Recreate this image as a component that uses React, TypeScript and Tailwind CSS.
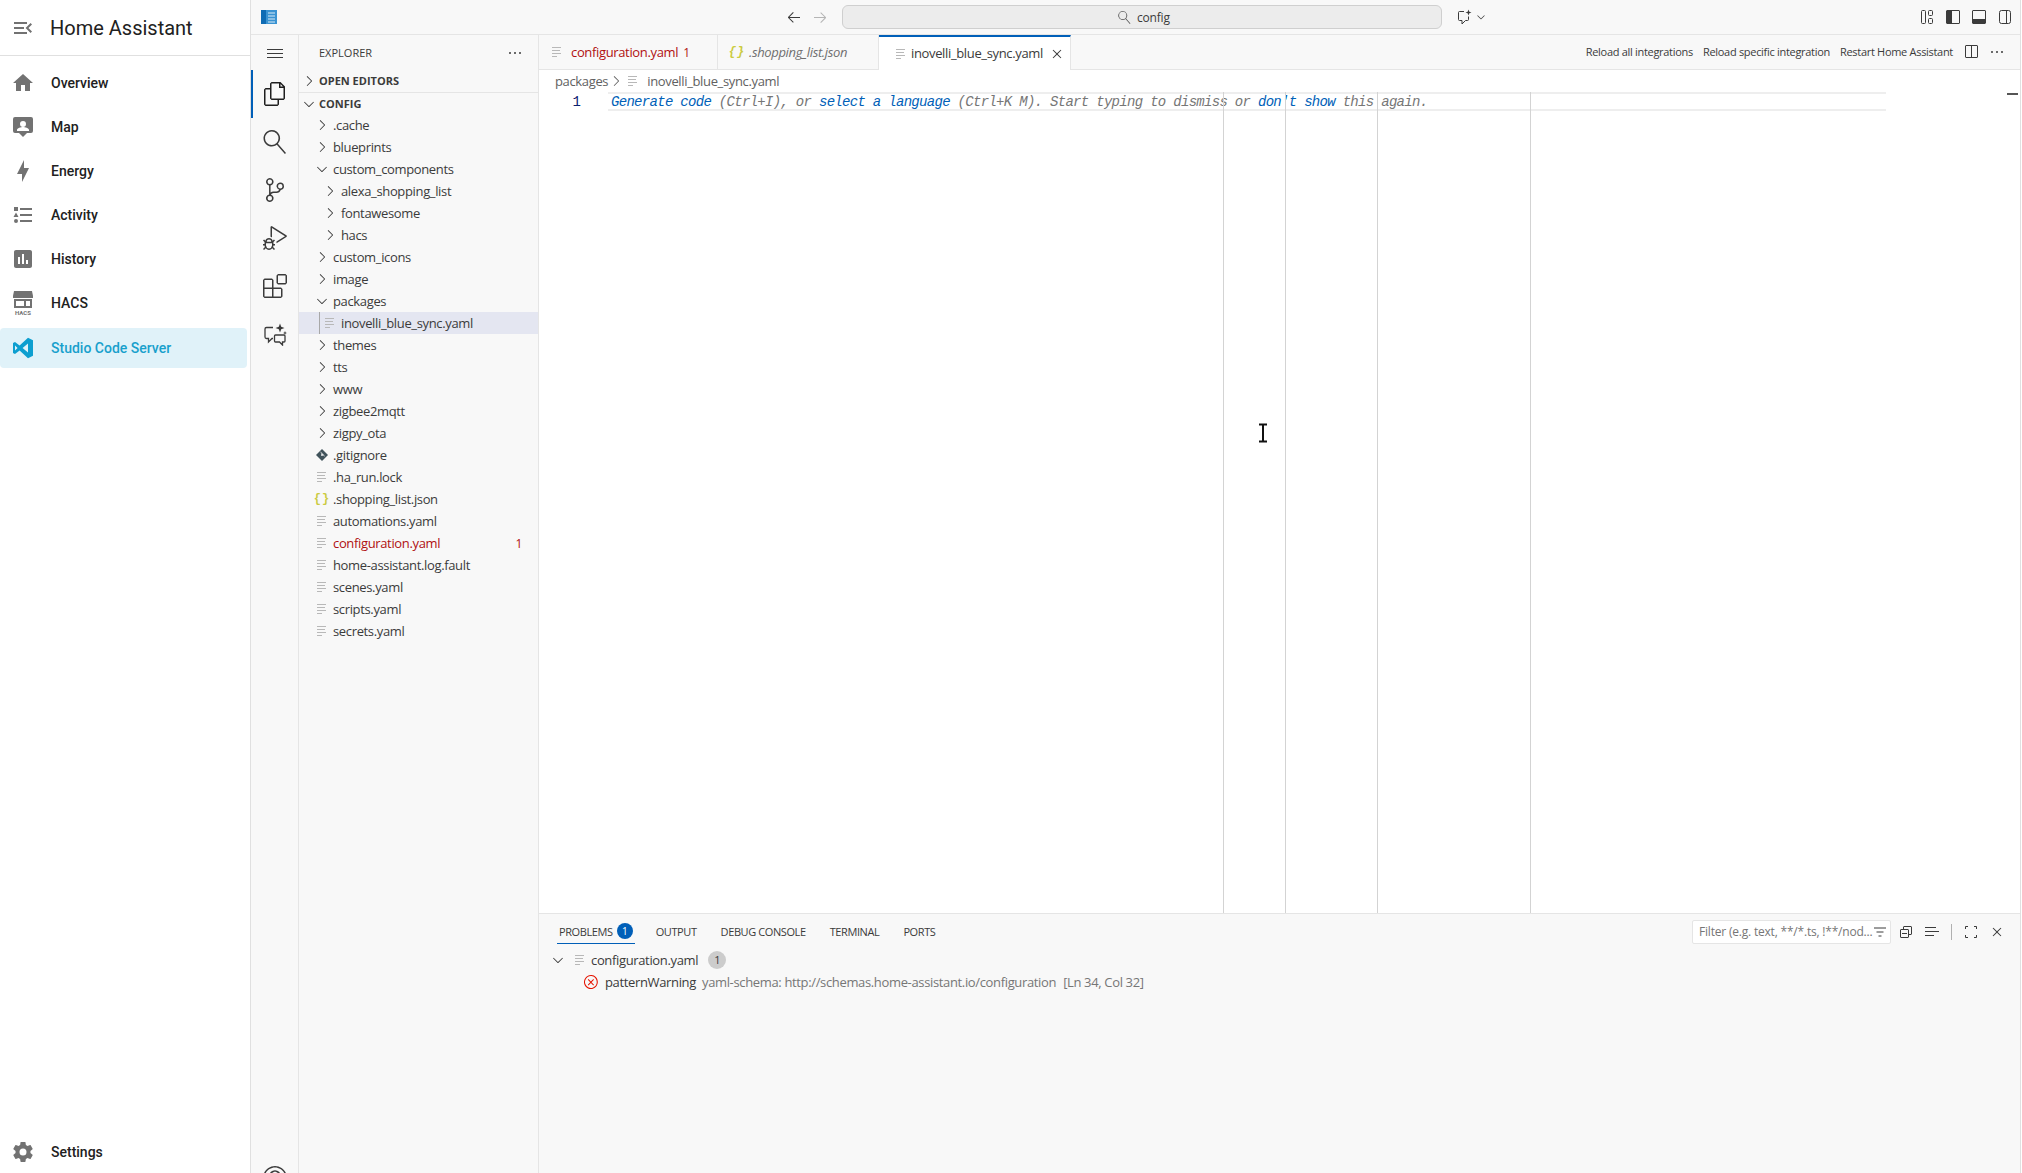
import React from 'react';
import {
  VscArrowLeft, VscArrowRight, VscChevronDown, VscChevronRight, VscClose, VscCollapseAll,
  VscDebugAlt, VscEllipsis, VscError, VscExtensions, VscFiles,
  VscLayoutPanel, VscLayoutSidebarLeft, VscMenu,
  VscSearch, VscSourceControl, VscSplitHorizontal, VscAccount, VscListSelection,
} from 'react-icons/vsc';

const mdi = {
  menuOpen: 'M21,15.61L19.59,17L14.58,12L19.59,7L21,8.39L17.44,12L21,15.61M3,6H16V8H3V6M3,13V11H13V13H3M3,18V16H16V18H3Z',
  home: 'M10,20V14H14V20H19V12H22L12,3L2,12H5V20H10Z',
  map: 'M4,2H20A2,2 0 0,1 22,4V16A2,2 0 0,1 20,18H16L12,22L8,18H4A2,2 0 0,1 2,16V4A2,2 0 0,1 4,2M12,6A3,3 0 0,0 9,9A3,3 0 0,0 12,12A3,3 0 0,0 15,9A3,3 0 0,0 12,6M6,16H18V15C18,13 14,12 12,12C10,12 6,13 6,15V16Z',
  bolt: 'M11,15H6L13,1V9H18L11,23V15Z',
  list: 'M5,9.5L7.5,14H2.5L5,9.5M3,4H7V8H3V4M5,20A2,2 0 0,0 7,18A2,2 0 0,0 5,16A2,2 0 0,0 3,18A2,2 0 0,0 5,20M9,5V7H21V5H9M9,19H21V17H9V19M9,13H21V11H9V13Z',
  chart: 'M19 3H5C3.9 3 3 3.9 3 5V19C3 20.1 3.9 21 5 21H19C20.1 21 21 20.1 21 19V5C21 3.9 20.1 3 19 3M9 17H7V10H9V17M13 17H11V7H13V17M17 17H15V13H17V17Z',
  cog: 'M12,15.5A3.5,3.5 0 0,1 8.5,12A3.5,3.5 0 0,1 12,8.5A3.5,3.5 0 0,1 15.5,12A3.5,3.5 0 0,1 12,15.5M19.43,12.97C19.47,12.65 19.5,12.33 19.5,12C19.5,11.67 19.47,11.34 19.43,11L21.54,9.37C21.73,9.22 21.78,8.95 21.66,8.73L19.66,5.27C19.54,5.05 19.27,4.96 19.05,5.05L16.56,6.05C16.04,5.66 15.5,5.32 14.87,5.07L14.5,2.42C14.46,2.18 14.25,2 14,2H10C9.75,2 9.54,2.18 9.5,2.42L9.13,5.07C8.5,5.32 7.96,5.66 7.44,6.05L4.95,5.05C4.73,4.96 4.46,5.05 4.34,5.27L2.34,8.73C2.21,8.95 2.27,9.22 2.46,9.37L4.57,11C4.53,11.34 4.5,11.67 4.5,12C4.5,12.33 4.53,12.65 4.57,12.97L2.46,14.63C2.27,14.78 2.21,15.05 2.34,15.27L4.34,18.73C4.46,18.95 4.73,19.03 4.95,18.95L7.44,17.94C7.96,18.34 8.5,18.68 9.13,18.93L9.5,21.58C9.54,21.82 9.75,22 10,22H14C14.25,22 14.46,21.82 14.5,21.58L14.87,18.93C15.5,18.67 16.04,18.34 16.56,17.94L19.05,18.95C19.27,19.03 19.54,18.95 19.66,18.73L21.66,15.27C21.78,15.05 21.73,14.78 21.54,14.63L19.43,12.97Z',
  vscode: 'M17 1.8L22 4.3V19.7L17 22.2L8.6 14.4L4 18L2 17V7L4 6L8.6 9.6ZM17 7.4L11.6 12L17 16.6ZM4 9.4V14.6L6.6 12Z',
};

const MdiIcon = ({ d, className }: { d: string; className: string }) => (
  <svg viewBox="0 0 24 24" className={className} fill="currentColor"><path d={d} /></svg>
);

const HacsIcon = () => (
  <svg viewBox="0 0 24 24" className="h-6 w-6 text-[#727272]" fill="currentColor">
    <path d="M3 0H21L22 5V7H2V5Z" />
    <path d="M3 8H21V17H3ZM5 10V15H13V10ZM15 10V15H19V10Z" fillRule="evenodd" />
    <text x="12" y="23.5" textAnchor="middle" fontSize="6" fontWeight="700" fontFamily="Roboto, sans-serif">HACS</text>
  </svg>
);

const FileIcon = ({ className = '' }: { className?: string }) => (
  <svg viewBox="0 0 16 16" className={`h-4 w-4 shrink-0 ${className}`} fill="none" stroke="#b8b8b8" strokeWidth="1.2">
    <path d="M3 3.5H12M3 6.5H11M3 9.5H12M3 12.5H8" />
  </svg>
);

const JsonIcon = () => (
  <span className="flex h-4 w-4 shrink-0 items-center justify-center text-[12px] font-bold tracking-[1px] text-[#cbcb41] font-['Liberation_Mono',monospace]">{'{}'}</span>
);

const GitIcon = () => (
  <svg viewBox="0 0 16 16" className="h-4 w-4 shrink-0">
    <path d="M8 2L14 8L8 14L2 8Z" fill="#41535b" />
    <path d="M6.6 5.2L10.5 9" stroke="#fff" strokeWidth="1" />
    <circle cx="8" cy="8" r="0.9" fill="#fff" />
  </svg>
);

// codicons that the icon set has in another version, drawn by hand
const LayoutIcon = () => (
  <svg viewBox="0 0 16 16" className="h-4 w-4" fill="none" stroke="currentColor">
    <rect x="2.5" y="1.5" width="4" height="13" rx="1" />
    <rect x="9.5" y="1.5" width="4" height="5" rx="1" />
    <rect x="9.5" y="9.5" width="4" height="5" rx="1" />
  </svg>
);

const SidebarRightOffIcon = () => (
  <svg viewBox="0 0 16 16" className="h-4 w-4" fill="none" stroke="currentColor">
    <rect x="2.5" y="1.5" width="11" height="13" rx="2" />
    <path d="M9.5 1.5V14.5" />
  </svg>
);

const FilterLinesIcon = () => (
  <svg viewBox="0 0 16 16" className="h-4 w-4 shrink-0 text-[#3b3b3b]" fill="none" stroke="currentColor">
    <path d="M2 4H14M4.5 8H11.5M6.5 12H9.5" />
  </svg>
);

const MaximizeIcon = () => (
  <svg viewBox="0 0 16 16" className="ml-[11px] h-4 w-4" fill="none" stroke="currentColor">
    <path d="M2.5 5V2.5H5M11 2.5H13.5V5M13.5 11V13.5H11M5 13.5H2.5V11" />
  </svg>
);

const ChatSparkleIcon = () => (
  <svg viewBox="0 0 16 16" className="ml-[15px] h-4 w-4 text-[#3b3b3b]" fill="none" stroke="currentColor">
    <path d="M7 2.5H2.5A1 1 0 0 0 1.5 3.5V10.5A1 1 0 0 0 2.5 11.5H5V15L8.5 11.5H10.5A1 1 0 0 0 11.5 10.5V7.5" />
    <path d="M11.5 0.5L12.3 2.7L14.5 3.5L12.3 4.3L11.5 6.5L10.7 4.3L8.5 3.5L10.7 2.7Z" fill="currentColor" stroke="none" />
  </svg>
);

const ChatsIcon = () => (
  <svg viewBox="0 0 24 24" className="h-6 w-6" fill="none" stroke="currentColor" strokeWidth="1.3">
    <path d="M10 5.5H3.5A1.5 1.5 0 0 0 2 7V15A1.5 1.5 0 0 0 3.5 16.5H5.5V20L9 16.5H10" />
    <path d="M12.5 13H21A1 1 0 0 1 22 14V19A1 1 0 0 1 21 20H19.5V23L16.5 20H12.5A1 1 0 0 1 11.5 19V14A1 1 0 0 1 12.5 13Z" />
    <path d="M17 1.5L18.2 4.8L21.5 6L18.2 7.2L17 10.5L15.8 7.2L12.5 6L15.8 4.8Z" fill="currentColor" stroke="none" />
    <path d="M22 9L22.6 10.4L24 11L22.6 11.6L22 13L21.4 11.6L20 11L21.4 10.4Z" fill="currentColor" stroke="none" />
  </svg>
);

const NAV = [
  { label: 'Overview', d: mdi.home },
  { label: 'Map', d: mdi.map },
  { label: 'Energy', d: mdi.bolt },
  { label: 'Activity', d: mdi.list },
  { label: 'History', d: mdi.chart },
];

type Row = {
  label: string;
  kind: 'open' | 'closed' | 'file' | 'json' | 'git';
  deep?: boolean;
  selected?: boolean;
  error?: boolean;
};

const TREE: Row[] = [
  { label: '.cache', kind: 'closed' },
  { label: 'blueprints', kind: 'closed' },
  { label: 'custom_components', kind: 'open' },
  { label: 'alexa_shopping_list', kind: 'closed', deep: true },
  { label: 'fontawesome', kind: 'closed', deep: true },
  { label: 'hacs', kind: 'closed', deep: true },
  { label: 'custom_icons', kind: 'closed' },
  { label: 'image', kind: 'closed' },
  { label: 'packages', kind: 'open' },
  { label: 'inovelli_blue_sync.yaml', kind: 'file', deep: true, selected: true },
  { label: 'themes', kind: 'closed' },
  { label: 'tts', kind: 'closed' },
  { label: 'www', kind: 'closed' },
  { label: 'zigbee2mqtt', kind: 'closed' },
  { label: 'zigpy_ota', kind: 'closed' },
  { label: '.gitignore', kind: 'git' },
  { label: '.ha_run.lock', kind: 'file' },
  { label: '.shopping_list.json', kind: 'json' },
  { label: 'automations.yaml', kind: 'file' },
  { label: 'configuration.yaml', kind: 'file', error: true },
  { label: 'home-assistant.log.fault', kind: 'file' },
  { label: 'scenes.yaml', kind: 'file' },
  { label: 'scripts.yaml', kind: 'file' },
  { label: 'secrets.yaml', kind: 'file' },
];

const HaSidebar = () => (
  <aside className="flex h-full w-[251px] shrink-0 flex-col border-r border-[#e0e0e0] bg-white font-['Roboto',sans-serif]">
    <div className="flex h-[56px] shrink-0 items-center border-b border-[#e0e0e0] pl-[11px]">
      <MdiIcon d={mdi.menuOpen} className="h-6 w-6 text-[#727272]" />
      <span className="ml-[15px] text-[20px] text-[#212121]">Home Assistant</span>
    </div>
    <nav className="flex flex-col pt-[5px]">
      {NAV.map((item) => (
        <div key={item.label} className="flex h-11 items-center pl-[11px]">
          <MdiIcon d={item.d} className="h-6 w-6 text-[#727272]" />
          <span className="ml-[16px] text-sm font-medium text-[#212121]">{item.label}</span>
        </div>
      ))}
      <div className="flex h-11 items-center pl-[11px]">
        <HacsIcon />
        <span className="ml-[16px] text-sm font-medium text-[#212121]">HACS</span>
      </div>
      <div className="mt-[3px] flex h-10 w-[247px] items-center rounded-[4px] bg-[#e0f2f9] pl-[11px]">
        <MdiIcon d={mdi.vscode} className="h-6 w-6 text-[#0d9fd0]" />
        <span className="ml-[16px] text-sm font-medium text-[#18a0cc]">Studio Code Server</span>
      </div>
    </nav>
    <div className="mt-auto mb-[1px] flex h-10 items-center pl-[11px]">
      <MdiIcon d={mdi.cog} className="h-6 w-6 text-[#727272]" />
      <span className="ml-[16px] text-sm font-medium text-[#212121]">Settings</span>
    </div>
  </aside>
);

const TitleBar = () => (
  <div className="flex h-[35px] shrink-0 items-center border-b border-[#e5e5e5] bg-[#f8f8f8]">
    <svg viewBox="0 0 16 14" className="ml-[10px] h-[14px] w-4">
      <rect width="16" height="14" fill="#3a93d2" />
      <rect x="0" width="5" height="14" fill="#0f6cb4" />
      <path d="M7 3H14M7 6H14M7 9H14M7 12H14" stroke="#d8ebf7" strokeWidth="1" />
    </svg>
    <VscArrowLeft className="ml-[509px] h-4 w-4 text-[#3b3b3b]" />
    <VscArrowRight className="ml-[10px] h-4 w-4 text-[#b5b5b5]" />
    <div className="ml-[14px] flex h-[24px] w-[600px] items-center rounded-[6px] border border-[#cfcfcf] bg-[#ececec] pl-[275px] text-[12px] tracking-[-0.2px] text-[#3b3b3b]">
      <VscSearch className="h-[13px] w-[13px] -scale-x-100 text-[#555]" />
      <span className="ml-[6px] pt-[1px]">config</span>
    </div>
    <ChatSparkleIcon />
    <VscChevronDown className="ml-[2px] h-3 w-3 text-[#3b3b3b]" />
    <div className="ml-auto flex items-center gap-[10px] pr-[7px] text-[#3b3b3b]">
      <LayoutIcon />
      <VscLayoutSidebarLeft className="h-4 w-4" />
      <VscLayoutPanel className="h-4 w-4" />
      <SidebarRightOffIcon />
    </div>
  </div>
);

const ActivityBar = () => (
  <div className="flex h-full w-[48px] shrink-0 flex-col items-center border-r border-[#e5e5e5] bg-[#f8f8f8] text-[#3b3b3b]">
    <div className="flex h-[35px] items-center justify-center"><VscMenu className="h-4 w-4" /></div>
    <div className="relative flex h-12 w-full items-center justify-center">
      <span className="absolute left-0 top-0 h-12 w-[2px] bg-[#005fb8]" />
      <VscFiles className="h-6 w-6 text-[#1f1f1f]" />
    </div>
    <div className="flex h-12 items-center justify-center"><VscSearch className="h-6 w-6 -scale-x-100" /></div>
    <div className="flex h-12 items-center justify-center"><VscSourceControl className="h-6 w-6" /></div>
    <div className="flex h-12 items-center justify-center"><VscDebugAlt className="h-6 w-6" /></div>
    <div className="flex h-12 items-center justify-center"><VscExtensions className="h-6 w-6" /></div>
    <div className="flex h-12 items-center justify-center"><ChatsIcon /></div>
    <div className="mt-auto mb-[-29px] flex h-12 shrink-0 items-center justify-center"><VscAccount className="h-6 w-6" /></div>
  </div>
);

const TreeRow = ({ row }: { row: Row }) => (
  <div className={`relative flex h-[22px] items-center text-[13px] tracking-[-0.35px] ${row.deep ? 'pl-[23px]' : 'pl-[15px]'} ${row.selected ? 'bg-[#e4e6f1]' : ''} ${row.error ? 'text-[#b01011]' : 'text-[#3b3b3b]'}`}>
    {row.selected && <span className="absolute left-[20px] top-0 h-full w-px bg-[#a8a8a8]" />}
    {row.kind === 'open' && <VscChevronDown className="h-4 w-4 shrink-0" />}
    {row.kind === 'closed' && <VscChevronRight className="h-4 w-4 shrink-0" />}
    {row.kind === 'file' && <FileIcon />}
    {row.kind === 'json' && <JsonIcon />}
    {row.kind === 'git' && <GitIcon />}
    <span className="ml-[3px] whitespace-nowrap pt-[2px]">{row.label}</span>
    {row.error && <span className="absolute right-[16px] pt-[1px] text-[12px] text-[#b01011]">1</span>}
  </div>
);

const Explorer = () => (
  <div className="flex h-full w-[240px] shrink-0 flex-col border-r border-[#e5e5e5] bg-[#f8f8f8] text-[#3b3b3b]">
    <div className="flex h-[35px] shrink-0 items-center justify-between pl-[20px] pr-[15px] text-[11px]">
      <span className="pt-[2px]">EXPLORER</span>
      <VscEllipsis className="h-4 w-4" />
    </div>
    <div className="flex h-[23px] shrink-0 items-center border-b border-[#e5e5e5] pl-[2px] text-[11px] font-bold">
      <VscChevronRight className="h-4 w-4" />
      <span className="ml-[2px]">OPEN EDITORS</span>
    </div>
    <div className="flex h-[21px] shrink-0 items-center pl-[2px] text-[11px] font-bold">
      <VscChevronDown className="h-4 w-4" />
      <span className="ml-[2px] pt-[2px]">CONFIG</span>
    </div>
    {TREE.map((row) => <TreeRow key={row.label} row={row} />)}
  </div>
);

const TabBar = () => (
  <div className="flex h-[35px] shrink-0 items-stretch border-b border-[#e5e5e5] bg-[#f8f8f8] text-[13px] tracking-[-0.35px]">
    <div className="flex w-[179px] items-center border-r border-[#e5e5e5] pl-[10px] text-[#b01011]">
      <FileIcon />
      <span className="ml-[6px] pt-[2px]">configuration.yaml</span>
      <span className="ml-[5px] pt-[2px] text-[12px]">1</span>
    </div>
    <div className="flex w-[161px] items-center border-r border-[#e5e5e5] pl-[11px] italic text-[#6f6f6f]">
      <JsonIcon />
      <span className="ml-[4px] pt-[2px]">.shopping_list.json</span>
    </div>
    <div className="mb-[-1px] flex w-[192px] items-center border-r border-t-2 border-[#e5e5e5] border-t-[#005fb8] bg-white pl-[14px] text-[#3b3b3b]">
      <FileIcon />
      <span className="ml-[2px]">inovelli_blue_sync.yaml</span>
      <VscClose className="ml-[6px] h-4 w-4" />
    </div>
    <div className="ml-auto flex items-center pr-[15px] text-[11px] tracking-[-0.3px] text-[#3b3b3b]">
      <span>Reload all integrations</span>
      <span className="ml-[10px]">Reload specific integration</span>
      <span className="ml-[10px]">Restart Home Assistant</span>
      <VscSplitHorizontal className="ml-[10px] h-4 w-4" />
      <VscEllipsis className="ml-[10px] h-4 w-4" />
    </div>
  </div>
);

const Editor = () => (
  <div className="relative flex min-h-0 flex-1 flex-col bg-white">
    <div className="flex h-[22px] shrink-0 items-center pl-[16px] text-[13px] tracking-[-0.35px] text-[#616161]">
      <span className="pt-[2px]">packages</span>
      <VscChevronRight className="h-4 w-4" />
      <FileIcon className="ml-[1px]" />
      <span className="ml-[6px] pt-[2px]">inovelli_blue_sync.yaml</span>
    </div>
    <div className="flex h-[19px] shrink-0 items-center">
      <span className="w-[69px] shrink-0 pr-[27px] pt-[1px] text-right text-[14px] text-[#0b216f] font-['Liberation_Mono',monospace]">1</span>
      <div className="flex h-[19px] w-[1278px] items-center whitespace-pre border-y-2 border-[#eeeeee] pl-[3px] pt-[1px] text-[14px] italic tracking-[-0.7px] text-[#767676] font-['Liberation_Mono',monospace]">
        <span className="text-[#005fb8]">Generate code</span> (Ctrl+I), or <span className="text-[#005fb8]">select a language</span> (Ctrl+K M). Start typing to dismiss or <span className="text-[#005fb8]">don't show</span> this again.
      </div>
    </div>
    {/* indent guides running over the editor */}
    <span className="absolute bottom-0 left-[684px] top-[22px] w-px bg-[#d3d3d3]" />
    <span className="absolute bottom-0 left-[746px] top-[22px] w-px bg-[#d3d3d3]" />
    <span className="absolute bottom-0 left-[838px] top-[22px] w-px bg-[#d3d3d3]" />
    <span className="absolute bottom-0 left-[991px] top-[22px] w-px bg-[#d3d3d3]" />
    <span className="absolute right-[2px] top-[23px] h-[2px] w-[11px] bg-[#555]" />
    <svg viewBox="0 0 12 20" className="absolute left-[718px] top-[353px] h-5 w-3" fill="none">
      <path d="M2 1.5H10M2 18.5H10M6 1.5V18.5" stroke="#fff" strokeWidth="4" />
      <path d="M2 1.5H10M2 18.5H10M6 1.5V18.5" stroke="#111" strokeWidth="2" />
    </svg>
  </div>
);

const Panel = () => (
  <div className="flex h-[260px] shrink-0 flex-col border-t border-[#e5e5e5] bg-[#f8f8f8] text-[#3b3b3b]">
    <div className="flex h-[35px] shrink-0 items-center text-[11px] tracking-[-0.4px]">
      <div className="ml-[18px] flex h-[24px] items-center border-b border-[#005fb8] px-[2px]">
        <span className="pt-[2px]">PROBLEMS</span>
        <span className="ml-[4px] flex h-[16px] w-[16px] items-center justify-center rounded-full bg-[#005fb8] text-[10px] text-white">1</span>
      </div>
      <span className="ml-[21px] pt-[2px]">OUTPUT</span>
      <span className="ml-[24px] pt-[2px]">DEBUG CONSOLE</span>
      <span className="ml-[24px] pt-[2px]">TERMINAL</span>
      <span className="ml-[24px] pt-[2px]">PORTS</span>
      <div className="ml-auto flex items-center pr-[15px]">
        <div className="flex h-[24px] w-[199px] items-center justify-between rounded-[2px] border border-[#e5e5e5] bg-white pl-[6px] pr-[6px] text-[12px] tracking-[-0.2px] text-[#767676]">
          <span className="whitespace-nowrap pt-[1px]">Filter (e.g. text, **/*.ts, !**/nod...</span>
          <FilterLinesIcon />
        </div>
        <VscCollapseAll className="ml-[7px] h-4 w-4" />
        <VscListSelection className="ml-[10px] h-4 w-4" />
        <span className="ml-[11px] h-4 w-px bg-[#b0b0b0]" />
        <MaximizeIcon />
        <VscClose className="ml-[10px] h-4 w-4" />
      </div>
    </div>
    <div className="flex h-[22px] items-center pl-[11px] text-[13px] tracking-[-0.35px]">
      <VscChevronDown className="h-4 w-4" />
      <FileIcon className="ml-[6px]" />
      <span className="ml-[3px] pt-[1px]">configuration.yaml</span>
      <span className="ml-[10px] flex h-[18px] w-[18px] items-center justify-center rounded-full bg-[#cccccc] text-[11px] text-[#3b3b3b]">1</span>
    </div>
    <div className="flex h-[22px] items-center pl-[44px] text-[13px] tracking-[-0.35px]">
      <VscError className="h-4 w-4 text-[#e51400]" />
      <span className="ml-[6px] pt-[1px]">patternWarning</span>
      <span className="ml-[6px] pt-[1px] text-[#767676]">yaml-schema: http://schemas.home-assistant.io/configuration</span>
      <span className="ml-[7px] pt-[1px] text-[#767676]">[Ln 34, Col 32]</span>
    </div>
  </div>
);

export default function App() {
  return (
    <div className="flex h-[1173px] w-[2022px] overflow-hidden bg-white font-['Open_Sans',sans-serif]">
      <HaSidebar />
      <main className="flex h-full w-[1770px] shrink-0 flex-col border-r border-[#e0e0e0]">
        <TitleBar />
        <div className="flex min-h-0 flex-1">
          <ActivityBar />
          <Explorer />
          <div className="flex min-w-0 flex-1 flex-col">
            <TabBar />
            <Editor />
            <Panel />
          </div>
        </div>
      </main>
    </div>
  );
}
